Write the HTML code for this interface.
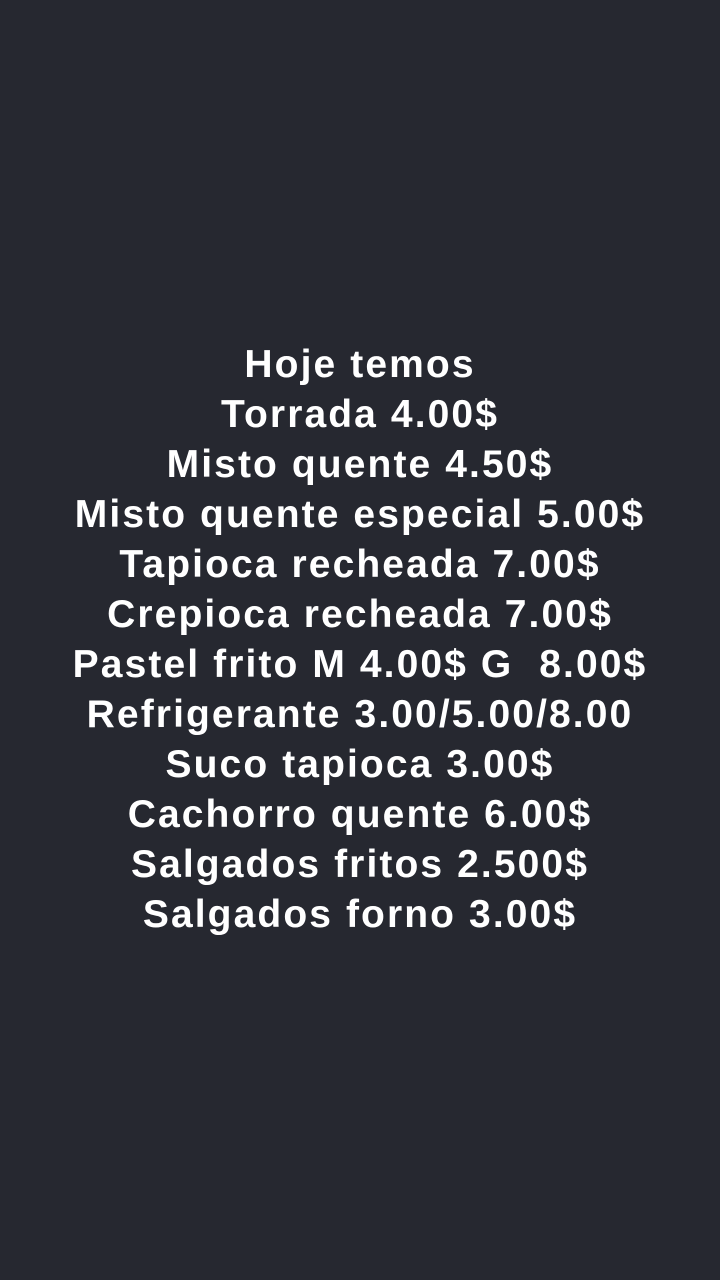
<!DOCTYPE html>
<html><head><meta charset="utf-8"><style>
html,body{margin:0;padding:0;}
body{width:720px;height:1280px;background:#262830;overflow:hidden;position:relative;}
.t{position:absolute;left:0;width:720px;top:340px;text-align:center;color:#fff;
font-family:"Liberation Sans",sans-serif;font-weight:bold;font-size:39px;line-height:50px;letter-spacing:2.1px;}
</style></head><body>
<div class="t">Hoje temos<br>Torrada 4.00$<br>Misto quente 4.50$<br>Misto quente especial 5.00$<br>Tapioca recheada 7.00$<br>Crepioca recheada 7.00$<br>Pastel frito M 4.00$ G&nbsp; 8.00$<br>Refrigerante 3.00/5.00/8.00<br>Suco tapioca 3.00$<br>Cachorro quente 6.00$<br>Salgados fritos 2.500$<br>Salgados forno 3.00$</div>
</body></html>
